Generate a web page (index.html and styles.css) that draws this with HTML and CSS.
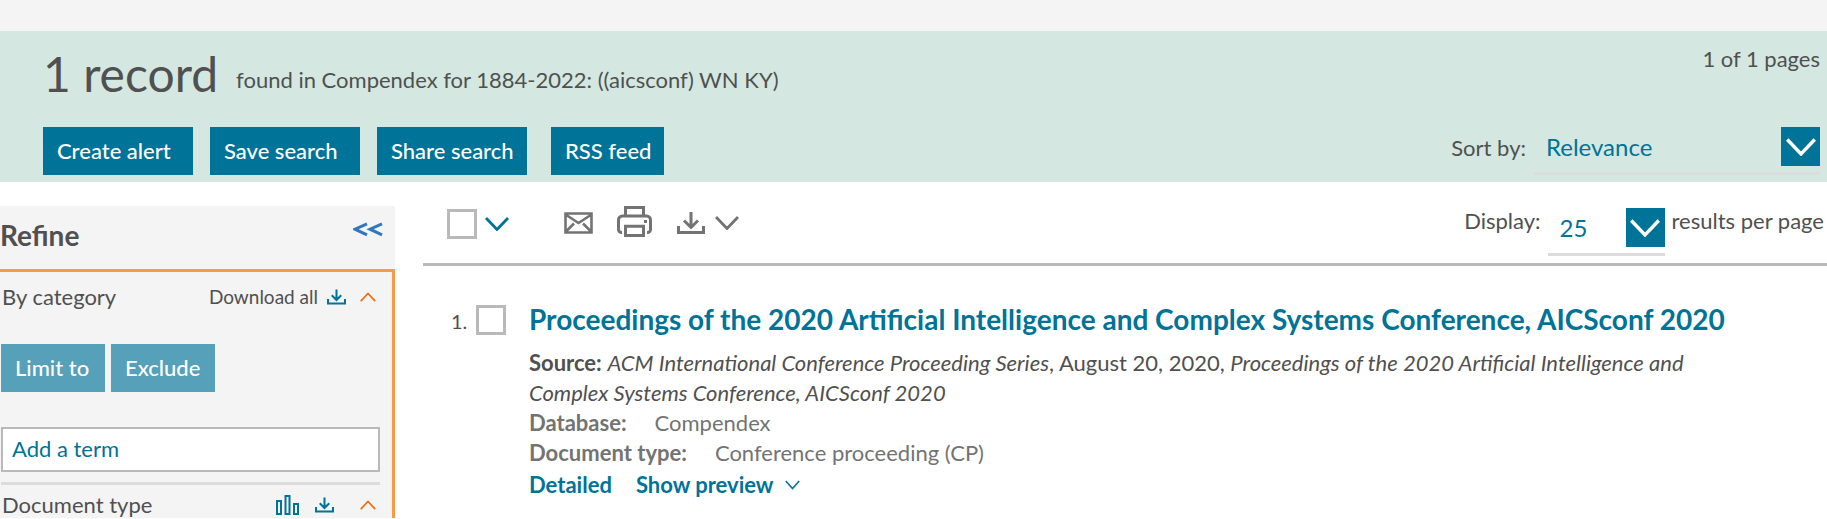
FILE: index.html
```html
<!DOCTYPE html>
<html lang="en">
<head>
<meta charset="utf-8">
<title>Search results</title>
<link rel="stylesheet" href="styles.css">
</head>
<body>
<svg class="sprite" aria-hidden="true">
  <symbol id="download" viewBox="0 0 28 22"><path d="M1.500 14v6.500h25V14M14 0v15M7 8.500l7 7 7-7" fill="none" stroke="currentColor" stroke-width="3"/></symbol>
  <symbol id="down" viewBox="0 0 24 14"><path d="M1 1l11 11.500L23 1" fill="none" stroke="currentColor" stroke-width="2.800"/></symbol>
  <symbol id="up" viewBox="0 0 16 10"><path d="M.8 9.200L8 1.500l7.200 7.700" fill="none" stroke="currentColor" stroke-width="1.800"/></symbol>
</svg>
<div class="topbar"></div>
<header class="summary">
  <div class="summary-row">
    <h1 class="count">1 record</h1>
    <p class="query">found in Compendex for 1884-2022: ((aicsconf) WN KY)</p>
    <span class="pages">1 of 1 pages</span>
  </div>
  <div class="actions">
    <button class="btn btn-wide">Create alert</button>
    <button class="btn btn-wide">Save search</button>
    <button class="btn btn-wide">Share search</button>
    <button class="btn btn-feed">RSS feed</button>
    <div class="sort">
      <label for="sort">Sort by:</label>
      <span class="select select-sort">
        <select id="sort"><option>Relevance</option></select>
        <span class="select-arrow"><svg width="30" height="18"><use href="#down"/></svg></span>
      </span>
    </div>
  </div>
</header>
<div class="columns">
  <aside class="sidebar">
    <div class="refine-head">
      <h2 class="refine-title">Refine</h2>
      <button class="collapse" aria-label="Collapse"><svg width="30" height="15" viewBox="0 0 30 15"><path d="M14 1.800L2 7.200l12 5.600M29 1.800L17 7.200l12 5.600" fill="none" stroke="currentColor" stroke-width="3"/></svg></button>
    </div>
    <div class="facets">
      <div class="facet-head">
        <h3 class="facet-title">By category</h3>
        <a class="download-all" href="#">Download all <svg class="teal" width="19" height="16"><use href="#download"/></svg></a>
        <button class="toggle" aria-label="Collapse category"><svg width="16" height="10"><use href="#up"/></svg></button>
      </div>
      <div class="facet-actions">
        <button class="btn btn-soft">Limit to</button>
        <button class="btn btn-soft">Exclude</button>
      </div>
      <input class="term" type="text" placeholder="Add a term" aria-label="Add a term">
      <div class="facet-head facet-next">
        <h3 class="facet-title">Document type</h3>
        <button class="icon-btn teal chart" aria-label="Chart"><svg width="23" height="20" viewBox="0 0 23 20"><path d="M1 6h4v13H1zM9.500 1h4v18h-4zM18 9h4v10h-4z" fill="none" stroke="currentColor" stroke-width="2"/></svg></button>
        <button class="icon-btn teal" aria-label="Download document types"><svg width="19" height="16"><use href="#download"/></svg></button>
        <button class="toggle" aria-label="Collapse document type"><svg width="16" height="10"><use href="#up"/></svg></button>
      </div>
    </div>
  </aside>
  <main class="results">
    <div class="toolbar">
      <input class="check" type="checkbox" aria-label="Select all">
      <button class="icon-btn teal select-menu" aria-label="Selection options"><svg width="24" height="14"><use href="#down"/></svg></button>
      <button class="icon-btn mail" aria-label="Email"><svg width="29" height="22" viewBox="0 0 29 22"><path d="M1.500 1.500h26v19h-26zM1.500 2.500L14.500 11 27.500 2.500M1.500 20L10 11.500M27.500 20L19 11.500" fill="none" stroke="currentColor" stroke-width="2.600"/></svg></button>
      <button class="icon-btn print" aria-label="Print"><svg width="35" height="31" viewBox="0 0 35 31"><path d="M8.500 10V1.500h18V10M5 26.500H4.500a3 3 0 0 1-3-3V14a4 4 0 0 1 4-4h24a4 4 0 0 1 4 4v9.500a3 3 0 0 1-3 3H30M8.500 20.200h18v9.300h-18z" fill="none" stroke="currentColor" stroke-width="3"/><path d="M27 14h3v3h-3z" fill="currentColor"/></svg></button>
      <button class="icon-btn save" aria-label="Download"><svg width="28" height="22"><use href="#download"/></svg><svg width="24" height="14"><use href="#down"/></svg></button>
      <div class="display">
        <label for="size">Display:</label>
        <span class="select select-size">
          <select id="size"><option>25</option></select>
          <span class="select-arrow"><svg width="30" height="18"><use href="#down"/></svg></span>
        </span>
        <span>results per page</span>
      </div>
    </div>
    <article class="record">
      <label class="number" for="rec1">1.</label>
      <input class="check" id="rec1" type="checkbox">
      <div class="record-body">
        <h2 class="record-title"><a href="#">Proceedings of the 2020 Artificial Intelligence and Complex Systems Conference, AICSconf 2020</a></h2>
        <p class="source"><b>Source:</b> <i>ACM International Conference Proceeding Series</i>, August 20, 2020, <i>Proceedings of the 2020 Artificial Intelligence and Complex Systems Conference, AICSconf 2020</i></p>
        <p class="meta"><b>Database:</b><span>Compendex</span></p>
        <p class="meta"><b>Document type:</b><span>Conference proceeding (CP)</span></p>
        <p class="links"><a href="#">Detailed</a><a href="#">Show preview <svg width="15" height="10" viewBox="0 0 15 10"><path d="M.8 1l6.700 7.500L14.200 1" fill="none" stroke="currentColor" stroke-width="1.600"/></svg></a></p>
      </div>
    </article>
  </main>
</div>
</body>
</html>
```
FILE: styles.css
```css
* { box-sizing: border-box; }
body { margin: 0; background: #fff; color: #505050; font: 22px/30px Lato, "Noto Sans", sans-serif; }
h1, h2, h3, p { margin: 0; font-size: inherit; font-weight: 400; }
button, input, select { font: inherit; color: inherit; margin: 0; }
button { border: 0; padding: 0; background: none; }
a { color: inherit; text-decoration: none; }
svg { display: block; flex: none; }
.sprite { position: absolute; width: 0; height: 0; }
.teal { color: #007398; }

.topbar { height: 31px; background: #f4f4f4; }
.summary { height: 151px; padding: 0 7px 0 43px; background: #d4e8e1; }
.summary-row { display: flex; align-items: flex-start; height: 96px; padding-top: 13px; }
.count { font-size: 48px; line-height: 60px; }
.query { margin-left: 18px; padding-top: 21px; }
.pages { margin-left: auto; }
.actions { display: flex; align-items: flex-start; gap: 17px; }
.btn { height: 48px; padding: 0 14px; background: #007398; color: #fff; font-weight: 500; text-align: left; white-space: nowrap; }
.btn-wide { width: 150px; }
.btn-feed { width: 113px; margin-left: 7px; }
.sort { display: flex; gap: 8px; margin-left: auto; }
.sort label { padding-top: 6px; }

.select { display: grid; grid-template-columns: 1fr 39px; height: 48px; color: #007398; border-bottom: 3px solid #dcdcdc; }
.select select { grid-area: 1 / 1 / 2 / 3; width: 100%; height: 39px; padding: 0 12px; border: 0; background: none; appearance: none; font-size: 24px; }
.select-arrow { grid-area: 1 / 2; display: flex; align-items: center; justify-content: center; height: 39px; background: #007398; color: #fff; pointer-events: none; }
.select-sort { width: 286px; }
.select-size { width: 117px; margin-top: 2px; }

.columns { display: flex; }
.sidebar { width: 395px; margin-top: 24px; background: #f4f4f4; }
.refine-head { display: flex; justify-content: space-between; height: 63px; padding: 13px 12px 0 0; }
.refine-title { font-size: 28px; line-height: 32px; font-weight: 700; }
.collapse { align-self: flex-start; margin-top: 3px; color: #2f78bf; }
.facets { border: solid #f9994a; border-width: 3px 3px 0 0; padding: 10px 12px 0 1px; }
.facet-head { display: flex; align-items: center; height: 30px; }
.facet-title { flex: 1; padding-left: 1px; }
.download-all { display: flex; align-items: center; gap: 9px; font-size: 19px; }
.toggle { margin: 0 4px 0 14px; color: #e9711c; }
.facet-actions { display: flex; gap: 6px; margin: 32px 0 35px; }
.btn-soft { min-width: 104px; background: #56a0b9; }
.term { display: block; width: 100%; height: 45px; padding: 0 9px 2px; border: 2px solid #b9b9b9; background: #fff; }
.term::placeholder { color: #007398; opacity: 1; }
.facet-next { height: 36px; margin-top: 10px; padding-top: 6px; border-top: 3px solid #dcdcdc; }
.facet-next .toggle { margin-left: 26px; }
.chart { margin-right: 16px; }

.results { flex: 1; min-width: 0; margin-left: 28px; }
.toolbar { display: flex; align-items: flex-start; height: 84px; padding: 24px 3px 0 24px; border-bottom: 3px solid #b9b9b9; }
.check { flex: none; width: 30px; height: 30px; margin-top: 3px; border: 3px solid #b9b9b9; background: #fff; appearance: none; }
.icon-btn { color: #737373; }
.icon-btn.teal { color: #007398; }
.select-menu { margin: 11px 55px 0 8px; }
.mail { margin: 6px 24px 0 0; }
.print { margin-right: 25px; }
.save { display: flex; align-items: center; gap: 10px; margin-top: 6px; }
.display { display: flex; gap: 7px; margin-left: auto; white-space: nowrap; }
.record { display: flex; padding: 36px 24px 0 28px; }
.number { width: 25px; padding-top: 4px; font-size: 20px; }
.record-body { flex: 1; max-width: 1210px; margin-left: 23px; }
.record-title { color: #007398; font-size: 28px; line-height: 34px; font-weight: 700; white-space: nowrap; }
.source { margin-top: 12px; }
.meta { color: #737373; }
.meta span { margin-left: 28px; }
.links { display: flex; gap: 24px; margin-top: 2px; color: #007398; font-weight: 700; }
.links a { display: flex; align-items: center; gap: 11px; }
```
